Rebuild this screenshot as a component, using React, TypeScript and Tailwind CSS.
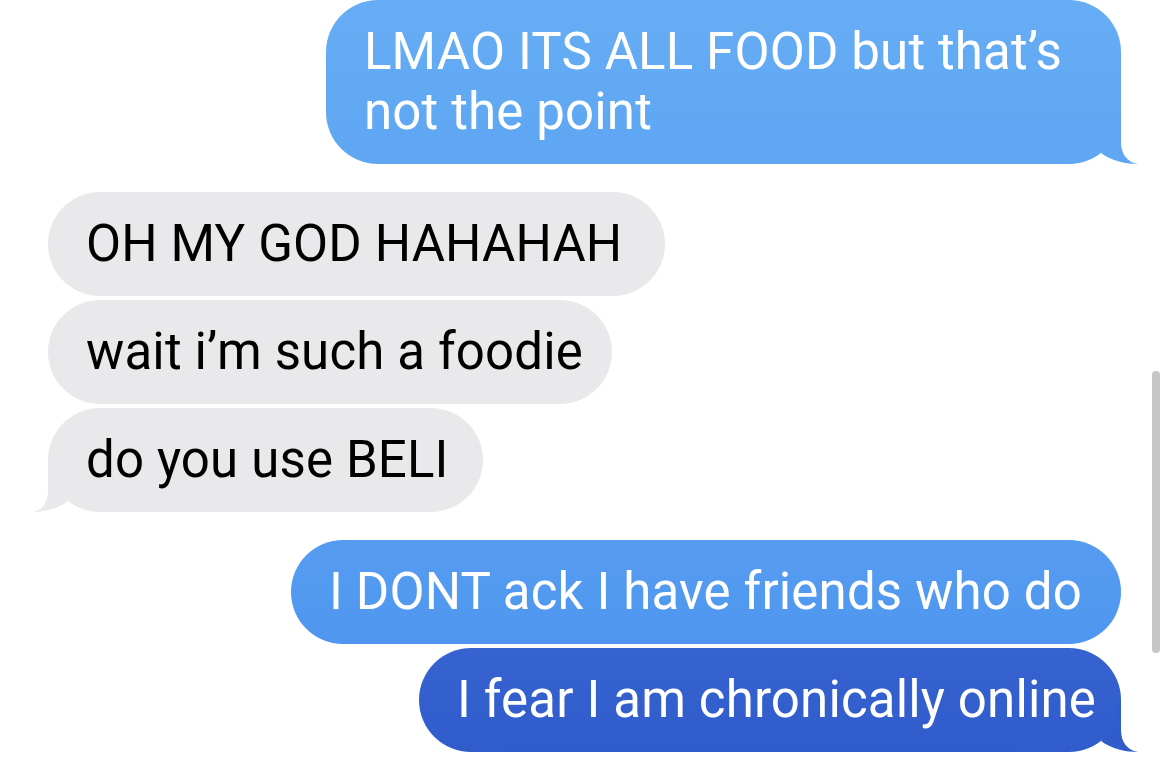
import React from 'react';

type Side = 'me' | 'them';

// iMessage style tail, drawn at the bottom corner of the last bubble in a group
const Tail = ({ side, color }: { side: Side; color: string }) => {
  if (side === 'me') {
    return (
      <svg className="absolute right-[-18px] bottom-0" width="42" height="53" viewBox="-24 -53 42 53">
        <path
          d="M -3 -53 L 0 -53 L 0 -22 C 0 -10 6 -2 17 0 C 6 0 -10 -3 -20 -11 L -14 -18 L -8 -26 L -4 -36 Z"
          fill={color}
        />
      </svg>
    );
  }
  return (
    <svg className="absolute left-[-16px] bottom-0" width="40" height="53" viewBox="-16 -53 40 53">
      <path
        d="M 3 -53 L 0 -53 L 0 -22 C 0 -10 -5 -2 -15 0 C -5 0 10 -3 20 -11 L 14 -18 L 8 -26 L 4 -36 Z"
        fill={color}
      />
    </svg>
  );
};

const Bubble = ({
  text,
  side,
  width,
  className,
  tail,
}: {
  text: React.ReactNode;
  side: Side;
  width: string;
  className: string;
  tail?: string;
}) => (
  <div
    className={`relative ${width} ${className} rounded-[52px] py-[22px] pl-[38px] pr-[30px] text-[51px] leading-[60px] tracking-[0.15px] whitespace-nowrap`}
  >
    <span className="relative z-10">{text}</span>
    {tail && <Tail side={side} color={tail} />}
  </div>
);

export default function App() {
  return (
    <div
      className="relative w-[1170px] h-[770px] overflow-hidden bg-white"
      style={{ fontFamily: 'Roboto, "Liberation Sans", Arial, sans-serif' }}
    >
      <div className="flex flex-col pl-[48px] pr-[49px]">
        {/* outgoing */}
        <div className="flex flex-col items-end">
          <Bubble
            side="me"
            width="w-[795px]"
            className="bg-gradient-to-b from-[#66adf5] to-[#5fa6f3] text-white"
            text={<>LMAO ITS ALL FOOD but that’s<br />not the point</>}
            tail="#5fa6f3"
          />
        </div>

        {/* incoming */}
        <div className="mt-[28px] flex flex-col items-start gap-[4px]">
          <Bubble side="them" width="w-[617px]" className="bg-[#e9e9eb] text-black" text="OH MY GOD HAHAHAH" />
          <Bubble side="them" width="w-[564px]" className="bg-[#e9e9eb] text-black" text="wait i’m such a foodie" />
          <Bubble side="them" width="w-[435px]" className="bg-[#e9e9eb] text-black" text="do you use BELI" tail="#e9e9eb" />
        </div>

        {/* outgoing */}
        <div className="mt-[28px] flex flex-col items-end gap-[4px]">
          <Bubble
            side="me"
            width="w-[830px]"
            className="bg-gradient-to-b from-[#559cf1] to-[#4f96ef] text-white"
            text="I DONT ack I have friends who do"
          />
          <Bubble
            side="me"
            width="w-[702px]"
            className="bg-gradient-to-b from-[#3663d0] to-[#315ccc] text-white"
            text="I fear I am chronically online"
            tail="#315ccc"
          />
        </div>
      </div>

      {/* scroll indicator */}
      <div className="absolute left-[1152px] top-[371px] h-[282px] w-[8px] rounded-full bg-[#c6c6c6]" />
    </div>
  );
}
